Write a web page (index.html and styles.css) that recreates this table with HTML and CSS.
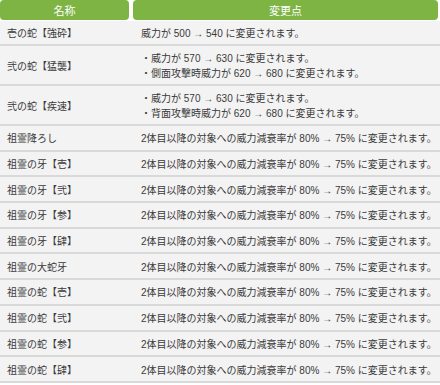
FILE: index.html
```html
<!DOCTYPE html>
<html lang="ja">
<head>
<meta charset="utf-8">
<link rel="stylesheet" href="styles.css">
</head>
<body>
<div class="table">
  <div class="head">
    <div class="hcell">名称</div>
    <div class="hcell">変更点</div>
  </div>
  <div class="row first">
    <div class="name">壱の蛇【強砕】</div>
    <div class="desc">威力が 500 → 540 に変更されます。</div>
  </div>
  <div class="row two">
    <div class="name">弐の蛇【猛襲】</div>
    <div class="desc"><div class="line">・威力が 570 → 630 に変更されます。</div><div class="line">・側面攻撃時威力が 620 → 680 に変更されます。</div></div>
  </div>
  <div class="row two">
    <div class="name">弐の蛇【疾速】</div>
    <div class="desc"><div class="line">・威力が 570 → 630 に変更されます。</div><div class="line">・背面攻撃時威力が 620 → 680 に変更されます。</div></div>
  </div>
  <div class="row">
    <div class="name">祖霊降ろし</div>
    <div class="desc">2体目以降の対象への威力減衰率が 80% → 75% に変更されます。</div>
  </div>
  <div class="row">
    <div class="name">祖霊の牙【壱】</div>
    <div class="desc">2体目以降の対象への威力減衰率が 80% → 75% に変更されます。</div>
  </div>
  <div class="row">
    <div class="name">祖霊の牙【弐】</div>
    <div class="desc">2体目以降の対象への威力減衰率が 80% → 75% に変更されます。</div>
  </div>
  <div class="row">
    <div class="name">祖霊の牙【参】</div>
    <div class="desc">2体目以降の対象への威力減衰率が 80% → 75% に変更されます。</div>
  </div>
  <div class="row">
    <div class="name">祖霊の牙【肆】</div>
    <div class="desc">2体目以降の対象への威力減衰率が 80% → 75% に変更されます。</div>
  </div>
  <div class="row">
    <div class="name">祖霊の大蛇牙</div>
    <div class="desc">2体目以降の対象への威力減衰率が 80% → 75% に変更されます。</div>
  </div>
  <div class="row">
    <div class="name">祖霊の蛇【壱】</div>
    <div class="desc">2体目以降の対象への威力減衰率が 80% → 75% に変更されます。</div>
  </div>
  <div class="row">
    <div class="name">祖霊の蛇【弐】</div>
    <div class="desc">2体目以降の対象への威力減衰率が 80% → 75% に変更されます。</div>
  </div>
  <div class="row">
    <div class="name">祖霊の蛇【参】</div>
    <div class="desc">2体目以降の対象への威力減衰率が 80% → 75% に変更されます。</div>
  </div>
  <div class="row">
    <div class="name">祖霊の蛇【肆】</div>
    <div class="desc">2体目以降の対象への威力減衰率が 80% → 75% に変更されます。</div>
  </div>
</div>
</body>
</html>
```
FILE: styles.css
```css
* { box-sizing: border-box; }
html, body { margin: 0; padding: 0; background: #ffffff; }
body {
  font-family: "Liberation Sans", "Noto Sans CJK JP", sans-serif;
  font-size: 10px;
  color: #3a3a3a;
  width: 440px;
  overflow: hidden;
}
.table { display: flex; flex-direction: column; }
.head {
  display: grid;
  grid-template-columns: 129px 305px;
  column-gap: 4px;
  height: 20px;
  margin-bottom: 1px;
}
.hcell {
  background: #7db443;
  color: #ffffff;
  border-radius: 4px;
  height: 20px;
  display: flex;
  align-items: center;
  justify-content: center;
  font-size: 11px;
}
.row {
  display: grid;
  grid-template-columns: 133px 1fr;
  background: #f3f3f3;
  border-bottom: 2px solid #d9d9d9;
  height: 25.7px;
  overflow: hidden;
}
.row.first { height: 25px; }
.row.two { height: 40px; }
.name, .desc {
  display: flex;
  flex-direction: column;
  justify-content: center;
  white-space: nowrap;
}
.line { height: 15.5px; display: flex; align-items: center; }
.name { padding-left: 7px; }
.desc { padding-left: 8px; }
```
